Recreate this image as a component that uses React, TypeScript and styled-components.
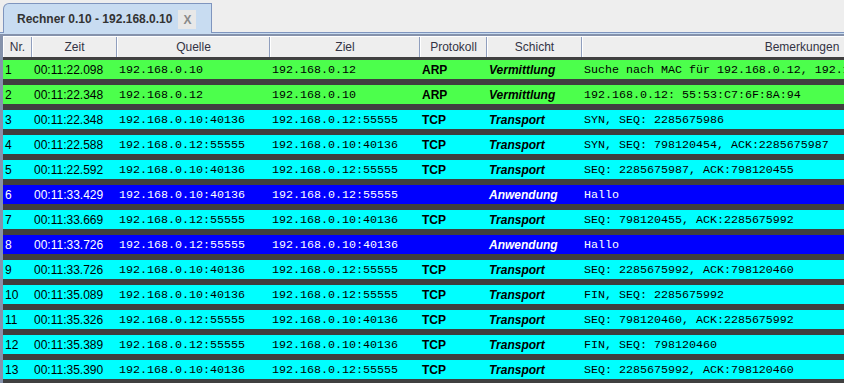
import React from "react";
import styled, { createGlobalStyle } from "styled-components";

const Global = createGlobalStyle`
  html, body { margin: 0; padding: 0; background: #eeeeee; overflow: hidden; }
  body { width: 844px; height: 383px; font-family: "Liberation Sans", Arial, sans-serif; }
`;

const Page = styled.div`
  width: 844px;
  height: 383px;
  overflow: hidden;
  display: flex;
  flex-direction: column;
  background: #eeeeee;
`;

const TabStrip = styled.div`
  height: 32px;
  display: flex;
  align-items: flex-end;
  padding-left: 3px;
  border-bottom: 1px solid #7f95be;
  flex-shrink: 0;
`;

const Tab = styled.div`
  width: 209px;
  height: 30px;
  margin-bottom: -1px;
  background: #c8dcf1;
  border: 1px solid #7f95be;
  border-bottom: none;
  border-top-left-radius: 6px;
  display: flex;
  align-items: center;
  padding-left: 13px;
  gap: 6px;
  box-sizing: border-box;
`;

const TabTitle = styled.span`
  font-weight: bold;
  font-size: 12px;
  color: #333333;
  white-space: nowrap;
`;

const CloseBox = styled.span`
  width: 18px;
  height: 19px;
  background: #e8e8e8;
  color: #8a8a8a;
  font-weight: bold;
  font-size: 12px;
  display: flex;
  align-items: center;
  justify-content: center;
  margin-top: 2px;
`;

const ContentBorder = styled.div`
  border-top: 1px solid #c8dcf1;
  flex: 1;
  display: flex;
  flex-direction: column;
  min-height: 0;
`;

const TablePanel = styled.div`
  border-top: 2px solid #8592ab;
  border-left: 3px solid #8592ab;
  flex: 1;
  overflow: hidden;
`;

const cols = "29px 85px 153px 150px 67px 95px 440px";

const HeaderRow = styled.div`
  display: grid;
  grid-template-columns: ${cols};
  height: 21px;
  background: #eeeeee;
  border-top: 1px solid #ffffff;
  box-sizing: border-box;
`;

const HeaderCell = styled.div`
  font-size: 12px;
  color: #333344;
  display: flex;
  align-items: center;
  justify-content: center;
  border-right: 1px solid #8f9ebd;
  border-left: 1px solid #ffffff;
  white-space: nowrap;
  overflow: hidden;
`;

const Body = styled.div`
  border-top: 3px solid #404040;
`;

type Kind = "arp" | "tcp" | "app";

const bg: Record<Kind, string> = {
  arp: "#4cff4c",
  tcp: "#00ffff",
  app: "#0000ff",
};

const Row = styled.div<{ $kind: Kind }>`
  display: grid;
  grid-template-columns: ${cols};
  height: 25px;
  box-sizing: border-box;
  background: ${(p) => bg[p.$kind]};
  border-bottom: 6px solid #404040;
  color: ${(p) => (p.$kind === "app" ? "#ffffff" : "#000000")};
`;

const Cell = styled.div<{ $font?: "sans" | "mono" | "bold" | "italic" }>`
  display: flex;
  align-items: center;
  padding-left: 2px;
  white-space: nowrap;
  overflow: hidden;
  font-family: ${(p) =>
    p.$font === "mono"
      ? '"Liberation Mono", "Courier New", monospace'
      : '"Liberation Sans", Arial, sans-serif'};
  font-size: ${(p) => (p.$font === "mono" ? "11.67px" : "12px")};
  font-weight: ${(p) => (p.$font === "bold" || p.$font === "italic" ? "bold" : "normal")};
  font-style: ${(p) => (p.$font === "italic" ? "italic" : "normal")};
`;

type Entry = [string, string, string, string, string, string, string, Kind];

const rows: Entry[] = [
  ["1", "00:11:22.098", "192.168.0.10", "192.168.0.12", "ARP", "Vermittlung", "Suche nach MAC für 192.168.0.12, 192.168.0.10", "arp"],
  ["2", "00:11:22.348", "192.168.0.12", "192.168.0.10", "ARP", "Vermittlung", "192.168.0.12: 55:53:C7:6F:8A:94", "arp"],
  ["3", "00:11:22.348", "192.168.0.10:40136", "192.168.0.12:55555", "TCP", "Transport", "SYN, SEQ: 2285675986", "tcp"],
  ["4", "00:11:22.588", "192.168.0.12:55555", "192.168.0.10:40136", "TCP", "Transport", "SYN, SEQ: 798120454, ACK:2285675987", "tcp"],
  ["5", "00:11:22.592", "192.168.0.10:40136", "192.168.0.12:55555", "TCP", "Transport", "SEQ: 2285675987, ACK:798120455", "tcp"],
  ["6", "00:11:33.429", "192.168.0.10:40136", "192.168.0.12:55555", "", "Anwendung", "Hallo", "app"],
  ["7", "00:11:33.669", "192.168.0.12:55555", "192.168.0.10:40136", "TCP", "Transport", "SEQ: 798120455, ACK:2285675992", "tcp"],
  ["8", "00:11:33.726", "192.168.0.12:55555", "192.168.0.10:40136", "", "Anwendung", "Hallo", "app"],
  ["9", "00:11:33.726", "192.168.0.10:40136", "192.168.0.12:55555", "TCP", "Transport", "SEQ: 2285675992, ACK:798120460", "tcp"],
  ["10", "00:11:35.089", "192.168.0.10:40136", "192.168.0.12:55555", "TCP", "Transport", "FIN, SEQ: 2285675992", "tcp"],
  ["11", "00:11:35.326", "192.168.0.12:55555", "192.168.0.10:40136", "TCP", "Transport", "SEQ: 798120460, ACK:2285675992", "tcp"],
  ["12", "00:11:35.389", "192.168.0.12:55555", "192.168.0.10:40136", "TCP", "Transport", "FIN, SEQ: 798120460", "tcp"],
  ["13", "00:11:35.390", "192.168.0.10:40136", "192.168.0.12:55555", "TCP", "Transport", "SEQ: 2285675992, ACK:798120460", "tcp"],
];

const headers = ["Nr.", "Zeit", "Quelle", "Ziel", "Protokoll", "Schicht", "Bemerkungen"];

export default function App() {
  return (
    <Page>
      <Global />
      <TabStrip>
        <Tab>
          <TabTitle>Rechner 0.10 - 192.168.0.10</TabTitle>
          <CloseBox>X</CloseBox>
        </Tab>
      </TabStrip>
      <ContentBorder>
        <TablePanel>
          <HeaderRow>
            {headers.map((h) => (
              <HeaderCell key={h}>{h}</HeaderCell>
            ))}
          </HeaderRow>
          <Body>
            {rows.map((r) => (
              <Row key={r[0]} $kind={r[7]}>
                <Cell>{r[0]}</Cell>
                <Cell>{r[1]}</Cell>
                <Cell $font="mono">{r[2]}</Cell>
                <Cell $font="mono">{r[3]}</Cell>
                <Cell $font="bold">{r[4]}</Cell>
                <Cell $font="italic">{r[5]}</Cell>
                <Cell $font="mono">{r[6]}</Cell>
              </Row>
            ))}
          </Body>
        </TablePanel>
      </ContentBorder>
    </Page>
  );
}
